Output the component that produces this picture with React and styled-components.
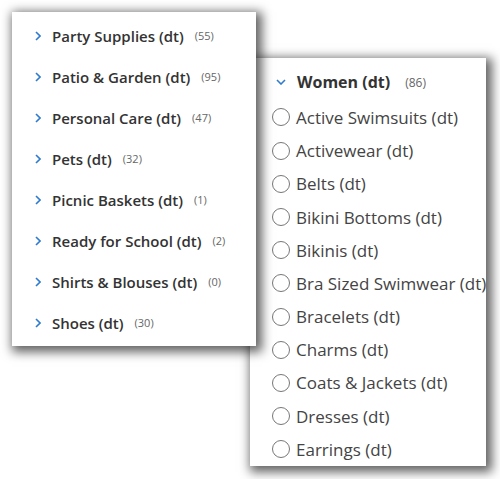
import React from 'react'
import styled, { createGlobalStyle } from 'styled-components'

const GlobalStyle = createGlobalStyle`
  html, body {
    margin: 0;
    padding: 0;
    background: #ffffff;
  }
  body {
    font-family: "Open Sans", "Noto Sans", sans-serif;
  }
`

const categories = [
  { name: 'Party Supplies (dt)', count: 55 },
  { name: 'Patio & Garden (dt)', count: 95 },
  { name: 'Personal Care (dt)', count: 47 },
  { name: 'Pets (dt)', count: 32 },
  { name: 'Picnic Baskets (dt)', count: 1 },
  { name: 'Ready for School (dt)', count: 2 },
  { name: 'Shirts & Blouses (dt)', count: 0 },
  { name: 'Shoes (dt)', count: 30 },
]

const womenItems = [
  'Active Swimsuits (dt)',
  'Activewear (dt)',
  'Belts (dt)',
  'Bikini Bottoms (dt)',
  'Bikinis (dt)',
  'Bra Sized Swimwear (dt)',
  'Bracelets (dt)',
  'Charms (dt)',
  'Coats & Jackets (dt)',
  'Dresses (dt)',
  'Earrings (dt)',
]

function ChevronRight() {
  return (
    <svg width="6" height="10" viewBox="0 0 6 10">
      <polyline points="1,1 5,5 1,9" fill="none" stroke="#2f7bd0" strokeWidth="1.6" />
    </svg>
  )
}

function ChevronDown() {
  return (
    <svg width="10" height="6" viewBox="0 0 10 6">
      <polyline points="1,1 5,5 9,1" fill="none" stroke="#2f7bd0" strokeWidth="1.6" />
    </svg>
  )
}

export default function App() {
  return (
    <>
      <GlobalStyle />
      <Canvas>
        <RightCard>
          <Header>
            <IconSlot>
              <ChevronDown />
            </IconSlot>
            <HeaderName>Women (dt)</HeaderName>
            <Count $size={12}>(86)</Count>
          </Header>
          {womenItems.map((item) => (
            <RadioRow key={item}>
              <Radio />
              <RadioLabel>{item}</RadioLabel>
            </RadioRow>
          ))}
        </RightCard>
        <LeftCard>
          {categories.map((c) => (
            <CategoryRow key={c.name}>
              <IconSlot>
                <ChevronRight />
              </IconSlot>
              <CategoryName>{c.name}</CategoryName>
              <Count $size={11}>({c.count})</Count>
            </CategoryRow>
          ))}
        </LeftCard>
      </Canvas>
    </>
  )
}

const Canvas = styled.div`
  position: relative;
  width: 500px;
  height: 479px;
  overflow: hidden;
`

const Card = styled.div`
  position: absolute;
  background: #ffffff;
  box-shadow: 3px 3px 10px 3px rgba(0, 0, 0, 0.62);
  display: flex;
  flex-direction: column;
  box-sizing: border-box;
`

const LeftCard = styled(Card)`
  left: 12px;
  top: 12px;
  width: 244px;
  height: 334px;
  padding-top: 3px;
  z-index: 2;
`

const RightCard = styled(Card)`
  left: 250px;
  top: 58px;
  width: 236px;
  height: 408px;
  padding-top: 6px;
  z-index: 1;
`

const CategoryRow = styled.div`
  height: 41px;
  display: flex;
  align-items: center;
  padding-left: 23px;
  white-space: nowrap;
`

const IconSlot = styled.span`
  width: 17px;
  display: flex;
  align-items: center;
`

const CategoryName = styled.span`
  font-size: 15px;
  font-weight: 600;
  color: #333333;
  margin-right: 11px;
`

const Count = styled.span`
  font-size: ${(p) => p.$size}px;
  color: #666666;
`

const Header = styled.div`
  height: 37px;
  display: flex;
  align-items: center;
  padding-left: 26px;
  white-space: nowrap;

  ${IconSlot} {
    width: 21px;
  }
`

const HeaderName = styled.span`
  font-size: 16px;
  font-weight: 700;
  color: #333333;
  margin-right: 15px;
`

const RadioRow = styled.div`
  height: 33.3px;
  display: flex;
  align-items: center;
  padding-left: 22px;
  white-space: nowrap;
`

const Radio = styled.span`
  width: 16px;
  height: 16px;
  border: 1.5px solid #777777;
  border-radius: 50%;
  margin-right: 6px;
  flex-shrink: 0;
`

const RadioLabel = styled.span`
  font-size: 17px;
  color: #444444;
`
